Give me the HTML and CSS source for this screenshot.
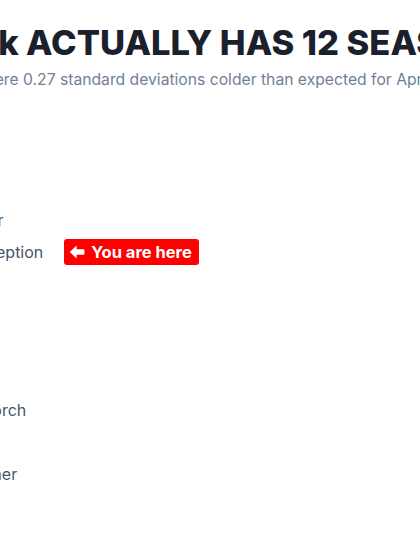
FILE: index.html
```html
<!DOCTYPE html>
<html lang="en">
<head>
<meta charset="utf-8">
<title>New York ACTUALLY HAS 12 SEASONS</title>
<link rel="stylesheet" href="styles.css">
</head>
<body>
<main class="page">
  <header class="intro">
    <h1 class="title">New York ACTUALLY HAS 12 SEASONS</h1>
    <p class="subtitle">Temperatures were 0.27 standard deviations colder than expected for April 12.</p>
  </header>
  <ol class="seasons">
    <li class="season">Winter</li>
    <li class="season">Fool's Spring</li>
    <li class="season">Second Winter</li>
    <li class="season current">Spring of Deception
      <span class="badge">
        <svg class="badge-icon" viewBox="0 0 16 16" aria-hidden="true"><path d="M0.8 8 L7.6 1.6 L7.6 5.2 L14.8 5.2 Q15.4 5.2 15.4 5.8 L15.4 10.2 Q15.4 10.8 14.8 10.8 L7.6 10.8 L7.6 14.4 Z" fill="#fff"/></svg>
        You are here
      </span>
    </li>
    <li class="season">Third Winter</li>
    <li class="season">The Pollening</li>
    <li class="season">Actual Spring</li>
    <li class="season">Summer</li>
    <li class="season">Hell's Front Porch</li>
    <li class="season">False Fall</li>
    <li class="season">Second Summer</li>
    <li class="season">Actual Fall</li>
  </ol>
</main>
</body>
</html>
```

FILE: styles.css
```css
html, body {
  margin: 0;
  padding: 0;
  background: #ffffff;
  overflow: hidden;
}

body {
  font-family: Inter, "Noto Sans", "Liberation Sans", sans-serif;
  color: #2d3748;
}

.page {
  width: 900px;
  margin-left: -131px;
  padding-top: 23px;
}

.title {
  margin: 0 0 0 -13px;
  font-size: 34.5px;
  line-height: 40px;
  font-weight: 800;
  color: #1a202c;
  white-space: nowrap;
}

.subtitle {
  margin: 5px 0 0 6px;
  font-size: 15.7px;
  line-height: 24px;
  color: #718096;
  white-space: nowrap;
}

.seasons {
  list-style: none;
  margin: 48.5px 0 0;
  padding: 0 0 0 23px;
}

.season {
  display: flex;
  align-items: center;
  gap: 21px;
  height: 31.75px;
  font-size: 16px;
  line-height: 24px;
  color: #4a5568;
  white-space: nowrap;
}

.badge {
  display: inline-flex;
  align-items: center;
  gap: 6px;
  height: 26px;
  padding: 0 7px 0 5px;
  border-radius: 3px;
  background: #ff0000;
  color: #ffffff;
  font-weight: 700;
  font-size: 16.5px;
}

.badge-icon {
  width: 16px;
  height: 16px;
}
```
